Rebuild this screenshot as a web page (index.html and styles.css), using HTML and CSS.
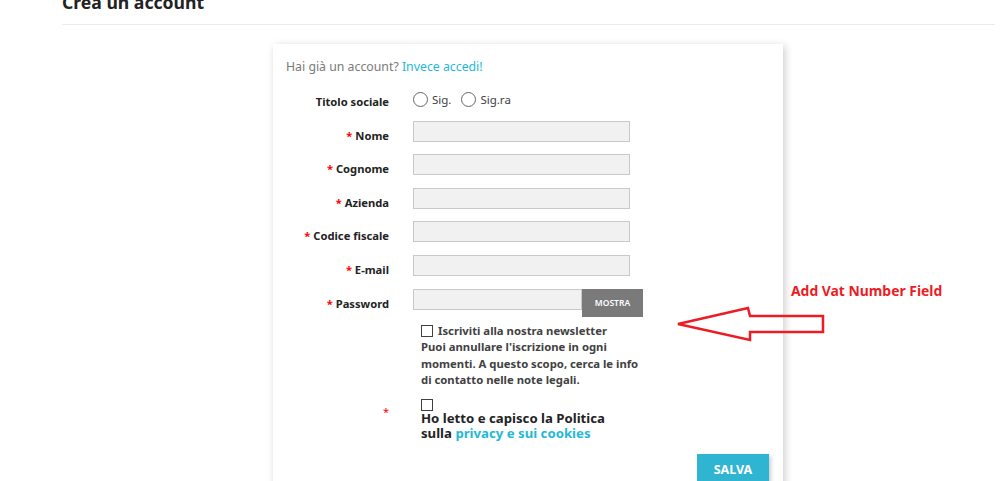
FILE: index.html
```html
<!DOCTYPE html>
<html lang="it">
<head>
<meta charset="utf-8">
<title>Crea un account</title>
<link rel="stylesheet" href="styles.css">
</head>
<body>
<div class="page">
  <h1 class="title">Crea un account</h1>
  <hr class="rule">
  <div class="card">
    <p class="intro">Hai già un account? <a href="#" class="link">Invece accedi!</a></p>
    <form class="form">
      <div class="row row-radio">
        <label class="label">Titolo sociale</label>
        <div class="field radios">
          <span class="radio-opt"><span class="radio"></span>Sig.</span>
          <span class="radio-opt"><span class="radio"></span>Sig.ra</span>
        </div>
      </div>
      <div class="row">
        <label class="label"><span class="req">*</span> Nome</label>
        <div class="field"><input class="input" type="text"></div>
      </div>
      <div class="row">
        <label class="label"><span class="req">*</span> Cognome</label>
        <div class="field"><input class="input" type="text"></div>
      </div>
      <div class="row">
        <label class="label"><span class="req">*</span> Azienda</label>
        <div class="field"><input class="input" type="text"></div>
      </div>
      <div class="row">
        <label class="label"><span class="req">*</span> Codice fiscale</label>
        <div class="field"><input class="input" type="text"></div>
      </div>
      <div class="row">
        <label class="label"><span class="req">*</span> E-mail</label>
        <div class="field"><input class="input" type="text"></div>
      </div>
      <div class="row">
        <label class="label"><span class="req">*</span> Password</label>
        <div class="field pw">
          <input class="input input-pw" type="password">
          <button type="button" class="show-btn">MOSTRA</button>
        </div>
      </div>
      <div class="newsletter">
        <p class="nl-line"><span class="check"></span>Iscriviti alla nostra newsletter</p>
        <p class="nl-text">Puoi annullare l'iscrizione in ogni momenti. A questo scopo, cerca le info di contatto nelle note legali.</p>
      </div>
      <div class="privacy-row">
        <span class="privacy-req">*</span>
        <div class="privacy">
          <span class="check"></span>
          <p class="privacy-text">Ho letto e capisco la Politica<br>sulla <a href="#" class="link">privacy e sui cookies</a></p>
        </div>
      </div>
      <div class="actions">
        <button type="button" class="save">SALVA</button>
      </div>
    </form>
  </div>
</div>
<div class="note">Add Vat Number Field</div>
<svg class="arrow" width="160" height="50" viewBox="670 300 160 50">
  <polygon points="678,324 748,308 750,316 823,316 823,332 750,332 750,340" fill="none" stroke="#ed1c24" stroke-width="2.5" stroke-linejoin="miter"/>
</svg>
</body>
</html>
```
FILE: styles.css
```css
* { box-sizing: border-box; }
html, body { margin: 0; padding: 0; background: #fff; }
body {
  font-family: "Noto Sans", "Open Sans", sans-serif;
  color: #232323;
  width: 1000px;
  height: 481px;
  overflow: hidden;
  position: relative;
}
.page { padding-left: 62px; padding-right: 5px; }
.title {
  margin: -10px 0 0 0;
  font-size: 17.6px;
  line-height: 24px;
  font-weight: 700;
  color: #232323;
}
.rule {
  border: 0;
  border-top: 1px solid #ebebeb;
  margin: 10px 0 0 0;
}
.card {
  margin: 19px 0 0 211px;
  width: 510px;
  height: 460px;
  background: #fff;
  box-shadow: 2px 2px 8px 0 rgba(0,0,0,0.2);
  padding: 14px 13px 0 13px;
}
.intro {
  margin: 0;
  font-size: 12.3px;
  line-height: 18px;
  color: #7a7a7a;
}
.link { color: #24b9d7; text-decoration: none; }
.form { margin-top: 11px; display: flex; flex-direction: column; }
.row {
  display: flex;
  height: 21px;
  margin-bottom: 12.6px;
}
.label {
  width: 103px;
  text-align: right;
  font-size: 11.2px;
  font-weight: 700;
  line-height: 16px;
  padding-top: 7px;
  color: #232323;
  white-space: nowrap;
}
.req { color: #ff0000; }
.field { margin-left: 24px; display: flex; align-items: flex-start; }
.radios { align-items: center; gap: 10px; padding-top: 9px; height: 15px; }
.radio-opt {
  display: flex;
  align-items: center;
  font-size: 11.5px;
  color: #414141;
}
.radio {
  width: 15px;
  height: 15px;
  border: 1.5px solid #666;
  border-radius: 50%;
  margin-right: 4px;
  display: inline-block;
}
.input {
  width: 217px;
  height: 21px;
  background: #f1f1f1;
  border: 1px solid #c9c9c9;
  margin: 0;
  padding: 0;
}
.input-pw { width: 169px; }
.show-btn {
  width: 61px;
  height: 28px;
  background: #7a7a7a;
  border: 0;
  color: #fff;
  font-family: "Noto Sans", sans-serif;
  font-size: 8.5px;
  font-weight: 600;
  padding: 0;
  margin: 0;
  line-height: 28px;
}
.newsletter {
  margin-left: 135px;
  margin-top: 1px;
  width: 222px;
  font-size: 11.3px;
  font-weight: 700;
  color: #414141;
  line-height: 16.3px;
}
.nl-line { margin: 0; display: flex; align-items: center; }
.nl-line .check { margin-right: 5px; }
.nl-text { margin: 0; }
.check {
  display: inline-block;
  width: 12px;
  height: 12px;
  border: 1.5px solid #414141;
  flex: none;
}
.privacy-row { display: flex; margin-top: 11px; }
.privacy-req {
  width: 103px;
  color: #ff0000;
  font-size: 11px;
  text-align: right;
  padding-top: 5px;
  line-height: 16px;
}
.privacy { margin-left: 32px; }
.privacy .check { display: block; }
.privacy-text {
  margin: 0;
  width: 200px;
  font-size: 13.2px;
  font-weight: 700;
  line-height: 15px;
  color: #232323;
}
.actions { display: flex; justify-content: flex-end; padding-right: 1px; margin-top: 13px; }
.save {
  width: 72px;
  height: 30px;
  background: #2fb5d2;
  border: 0;
  color: #fff;
  font-family: "Noto Sans", sans-serif;
  font-weight: 700;
  font-size: 12.5px;
  box-shadow: 2px 2px 4px rgba(0,0,0,0.2);
}
.note {
  position: absolute;
  left: 791px;
  top: 282px;
  font-family: "Noto Sans", sans-serif;
  font-weight: 700;
  font-size: 13.9px;
  color: #ed1c24;
  line-height: 18px;
}
.arrow { position: absolute; left: 670px; top: 300px; }
```
